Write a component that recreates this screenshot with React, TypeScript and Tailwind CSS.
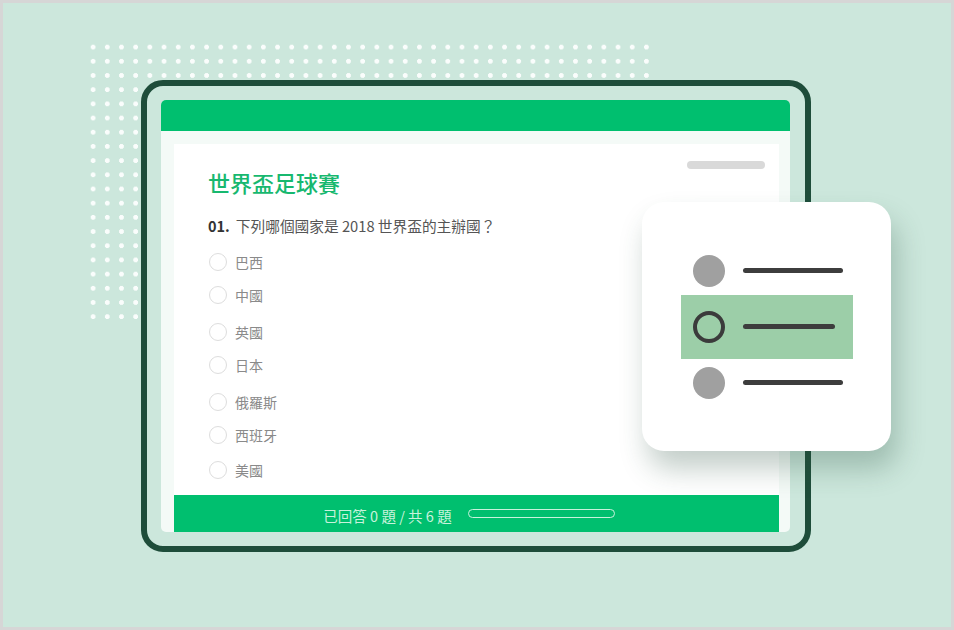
import React from "react";

const font = { fontFamily: '"Noto Sans CJK TC", "Noto Sans", sans-serif' };

const options = [
  { label: "巴西", mt: "mt-[16px]" },
  { label: "中國", mt: "mt-[13px]" },
  { label: "英國", mt: "mt-[17px]" },
  { label: "日本", mt: "mt-[13px]" },
  { label: "俄羅斯", mt: "mt-[17px]" },
  { label: "西班牙", mt: "mt-[13px]" },
  { label: "美國", mt: "mt-[15px]" },
];

function ChoiceRow({ active }: { active?: boolean }) {
  return (
    <div
      className={
        active
          ? "flex h-[64px] items-center pl-[12px] bg-[#9ccea8]"
          : "flex h-[48px] items-center pl-[12px]"
      }
    >
      {active ? (
        <div className="w-[32px] h-[32px] rounded-full border-[4.5px] border-[#3b3b3b]" />
      ) : (
        <div className="w-[32px] h-[32px] rounded-full bg-[#a0a0a0]" />
      )}
      <div
        className={
          active
            ? "ml-[18px] w-[92px] h-[5px] rounded-full bg-[#3d3d3d]"
            : "ml-[18px] w-[100px] h-[5px] rounded-full bg-[#3d3d3d]"
        }
      />
    </div>
  );
}

export default function App() {
  return (
    <div
      style={font}
      className="relative w-[954px] h-[630px] overflow-hidden border-[3px] border-[#d6d6d6] bg-[#cce7dc]"
    >
      {/* dot grid behind the tablet */}
      <div className="absolute left-[82.6px] top-[36.6px] w-[568px] h-[284px] bg-[radial-gradient(circle,rgba(255,255,255,0.9)_2.2px,transparent_2.7px)] bg-[length:14.2px_14.2px]" />

      {/* tablet */}
      <div className="relative ml-[138px] mt-[77px] w-[670px] h-[472px] rounded-[22px] border-[6px] border-[#1e4d3a] bg-[#cce7dc] p-[14px]">
        <div className="flex flex-col w-[629px] h-[432px] rounded-[5px] overflow-hidden bg-[#f4faf7]">
          <div className="h-[31px] bg-[#00bf6f]" />
          <div className="flex flex-1 flex-col pl-[13px] pr-[11px] pt-[13px]">
            <div className="flex flex-1 flex-col bg-white pl-[34px] pt-[17px]">
              <div className="flex justify-end pr-[14px]">
                <div className="w-[78px] h-[8px] rounded-full bg-[#d9d9d9]" />
              </div>
              <h1 className="-mt-[2px] text-[22px] leading-[30px] font-medium text-[#17b86f]">
                世界盃足球賽
              </h1>
              <div className="mt-[19px] flex items-center h-[20px] leading-[20px]">
                <span className="text-[14.5px] font-bold text-[#333]">01.</span>
                <span className="ml-[6px] text-[14.7px] text-[#555]">下列哪個國家是 2018 世界盃的主辦國？</span>
              </div>
              {options.map((o) => (
                <div key={o.label} className={`${o.mt} flex items-center h-[20px]`}>
                  <div className="ml-[1px] w-[18px] h-[18px] rounded-full border border-[#dddddd]" />
                  <span className="ml-[8px] text-[14px] leading-[20px] text-[#8a8a8a]">{o.label}</span>
                </div>
              ))}
            </div>
            <div className="flex h-[37px] items-center justify-center gap-[16px] bg-[#00bf6f] pr-[15px]">
              <span className="pt-[4px] text-[14.5px] leading-[20px] text-[#c8f2dc]">已回答 0 題 / 共 6 題</span>
              <div className="w-[147px] h-[9px] rounded-full border border-[#c8f2dc]" />
            </div>
          </div>
        </div>
      </div>

      {/* floating choice card */}
      <div className="absolute left-[639px] top-[199px] flex flex-col justify-center w-[249px] h-[249px] rounded-[22px] bg-white pl-[39px] pr-[38px] shadow-[6px_18px_28px_rgba(40,80,60,0.28)]">
        <ChoiceRow />
        <ChoiceRow active />
        <ChoiceRow />
      </div>
    </div>
  );
}
